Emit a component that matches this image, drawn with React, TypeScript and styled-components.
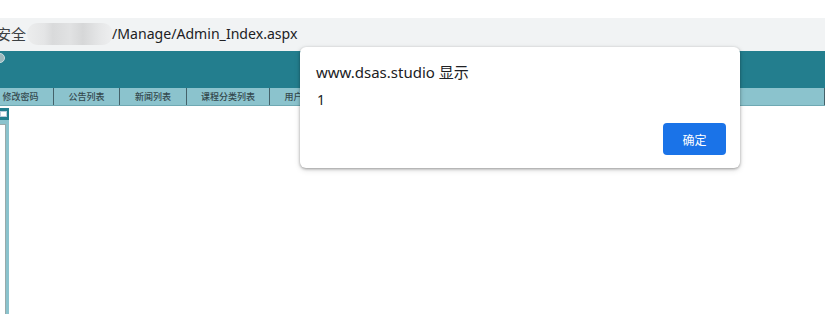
import styled, { createGlobalStyle } from "styled-components";

const GlobalStyle = createGlobalStyle`
  html, body {
    margin: 0;
    padding: 0;
    background: #ffffff;
  }
  body {
    font-family: "Noto Sans", "Noto Sans CJK SC", sans-serif;
  }
`;

const Page = styled.div`
  position: relative;
  width: 825px;
  height: 314px;
  overflow: hidden;
  background: #ffffff;
`;

const TabStrip = styled.div`
  height: 18px;
  background: #ffffff;
`;

const AddressBar = styled.div`
  height: 33px;
  background: #f1f3f4;
  display: flex;
  align-items: center;
  font-size: 14px;
  color: #202124;
  padding-bottom: 2px;
  box-sizing: border-box;
  white-space: nowrap;
`;

const Secure = styled.span`
  margin-left: -4px;
  font-size: 15px;
  color: #3c4043;
  font-family: "Noto Sans CJK SC", sans-serif;
`;

const Blurred = styled.span`
  display: inline-block;
  width: 86px;
  height: 22px;
  margin-left: 1px;
  border-radius: 11px;
  background: linear-gradient(90deg, #eceded 0%, #e4e5e6 20%, #d9dadb 30%, #e1e2e3 50%, #d6d7d8 65%, #e6e7e8 85%, #eeeff0 100%);
`;

const Path = styled.span`
  margin-left: -1px;
  font-size: 14.1px;
`;

const Header = styled.div`
  height: 37px;
  background: #237e8e;
  position: relative;
`;

const Logo = styled.span`
  position: absolute;
  left: -5px;
  top: 2px;
  width: 8px;
  height: 8px;
  border-radius: 50%;
  border: 1px solid #c9dde0;
  background: #9cb8bd;
`;

const NavBar = styled.div`
  height: 18px;
  background: #8bc3cd;
  display: flex;
  align-items: stretch;
  border-bottom: 1px solid #6fa9b3;
  box-sizing: border-box;
  overflow: hidden;
`;

const NavItem = styled.div<{ w: number; offset?: number }>`
  width: ${(p) => p.w}px;
  margin-left: ${(p) => -(p.offset ?? 0)}px;
  flex: none;
  display: flex;
  align-items: center;
  justify-content: center;
  font-family: "Noto Sans CJK SC", sans-serif;
  font-size: 9px;
  font-weight: 500;
  color: #34494e;
  border-right: 1px solid #44626a;
  box-sizing: border-box;
  white-space: nowrap;
  overflow: hidden;
`;

const Body = styled.div`
  display: flex;
  height: 208px;
`;

const Side = styled.div`
  width: 9px;
  display: flex;
  flex-direction: column;
`;

const SideTop = styled.div`
  height: 12px;
  margin-top: 2px;
  background: #237e8e;
  position: relative;
`;

const SideBtn = styled.span`
  position: absolute;
  left: 0;
  top: 3px;
  width: 5px;
  height: 4px;
  background: #ffffff;
  border: 1px solid #bcd;
`;

const SideFrame = styled.div`
  flex: 1;
  background: #8bc3cd;
  padding: 4px 3px 0 0;
  display: flex;
`;

const SideInner = styled.div`
  flex: 1;
  background: #ffffff;
  border-top: 1px solid #9aa;
  border-right: 1px solid #9aa;
`;

const Dialog = styled.div`
  position: absolute;
  left: 300px;
  top: 47px;
  width: 440px;
  height: 121px;
  box-sizing: border-box;
  background: #ffffff;
  border-radius: 6px;
  box-shadow: 0 1px 3px rgba(0, 0, 0, 0.35), 0 2px 6px rgba(0, 0, 0, 0.12);
  padding: 16px 16px 0 16px;
  display: flex;
  flex-direction: column;
`;

const DialogTitle = styled.div`
  font-size: 15px;
  color: #202124;
  line-height: 18px;
  font-family: "Noto Sans", "Noto Sans CJK SC", sans-serif;
`;

const DialogMsg = styled.div`
  margin-top: 10px;
  font-size: 14px;
  color: #202124;
  line-height: 17px;
  padding-left: 1px;
`;

const Actions = styled.div`
  display: flex;
  justify-content: flex-end;
  margin-top: 15px;
`;

const OkButton = styled.button`
  width: 63px;
  height: 32px;
  margin-right: -2px;
  border: none;
  border-radius: 4px;
  background: #1a73e8;
  color: #ffffff;
  font-family: "Noto Sans CJK SC", sans-serif;
  font-size: 12px;
  padding: 0;
`;

// the page is scrolled a little, so the first tab is cut at the left edge
const tabs: { label: string; w: number; offset?: number }[] = [
  { label: "修改密码", w: 66, offset: 12 },
  { label: "公告列表", w: 66 },
  { label: "新闻列表", w: 67 },
  { label: "课程分类列表", w: 83 },
  { label: "用户管理", w: 66 },
  { label: "", w: 489 },
];

export default function App() {
  return (
    <Page>
      <GlobalStyle />
      <TabStrip />
      <AddressBar>
        <Secure>安全</Secure>
        <Blurred />
        <Path>/Manage/Admin_Index.aspx</Path>
      </AddressBar>
      <Header>
        <Logo />
      </Header>
      <NavBar>
        {tabs.map((t, i) => (
          <NavItem key={i} w={t.w} offset={t.offset}>
            {t.label}
          </NavItem>
        ))}
      </NavBar>
      <Body>
        <Side>
          <SideTop>
            <SideBtn />
          </SideTop>
          <SideFrame>
            <SideInner />
          </SideFrame>
        </Side>
      </Body>
      <Dialog>
        <DialogTitle>www.dsas.studio 显示</DialogTitle>
        <DialogMsg>1</DialogMsg>
        <Actions>
          <OkButton>确定</OkButton>
        </Actions>
      </Dialog>
    </Page>
  );
}
